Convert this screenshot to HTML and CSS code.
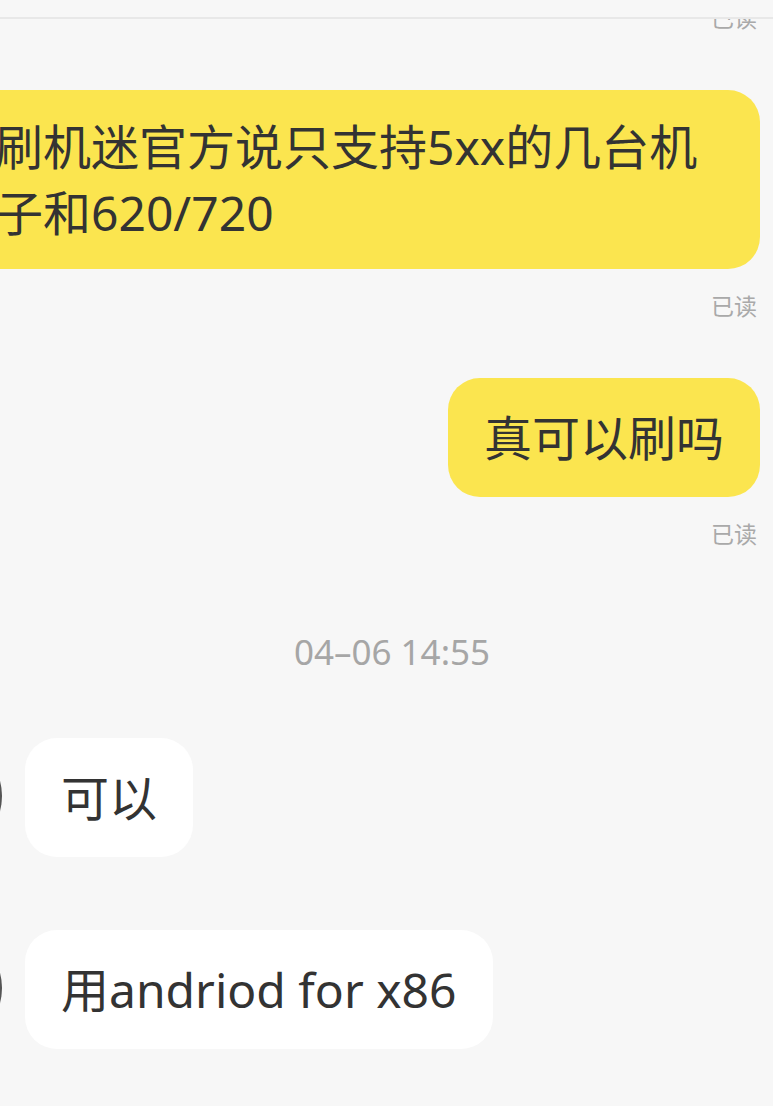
FILE: index.html
```html
<!DOCTYPE html>
<html lang="zh-CN">
<head>
<meta charset="utf-8">
<title>聊天</title>
<link rel="stylesheet" href="styles.css">
</head>
<body>
<header class="topbar"></header>
<main class="chat">
  <div class="read read-first">已读</div>

  <div class="row out gap-a">
    <div class="bubble yellow wide">刷机迷官方说只支持5xx的几台机子和620/720</div>
  </div>
  <div class="read">已读</div>

  <div class="row out gap-a">
    <div class="bubble yellow single">真可以刷吗</div>
  </div>
  <div class="read">已读</div>

  <div class="time">04–06 14:55</div>

  <div class="row in gap-b">
    <div class="avatar"></div>
    <div class="bubble white single">可以</div>
  </div>

  <div class="row in gap-c">
    <div class="avatar"></div>
    <div class="bubble white single">用andriod for x86</div>
  </div>
</main>
</body>
</html>
```
FILE: styles.css
```css
html, body {
  margin: 0;
  padding: 0;
  background: #f7f7f7;
  overflow: hidden;
}

body {
  width: 773px;
  height: 1106px;
  font-family: "Noto Sans", "Noto Sans CJK SC", sans-serif;
  color: #333333;
}

.topbar {
  position: fixed;
  top: 0;
  left: 0;
  right: 0;
  height: 17px;
  background: #f7f7f7;
  border-bottom: 2px solid #e8e8e8;
  z-index: 2;
}

.chat {
  display: flex;
  flex-direction: column;
  padding: 3px 13px 0 0;
}

.read {
  align-self: flex-end;
  font-size: 23px;
  line-height: 30px;
  color: #a9a9a9;
  margin-top: 22px;
  padding-right: 3px;
}

.read-first {
  margin-top: 0;
}

.row {
  display: flex;
  align-items: flex-start;
}

.row.out {
  justify-content: flex-end;
}

.row.in {
  margin-left: -114px;
  gap: 23px;
}

.gap-a { margin-top: 57px; }
.gap-b { margin-top: 66px; }
.gap-c { margin-top: 73px; }

.bubble {
  flex-shrink: 0;
  box-sizing: border-box;
  font-size: 48px;
  line-height: 65.5px;
  padding: 24px 36px;
  border-radius: 32px;
  min-height: 119px;
}

.bubble.single {
  display: flex;
  align-items: center;
  white-space: nowrap;
}

.bubble.wide {
  width: 802px;
  padding-left: 37px;
}

.yellow {
  background: #fbe54f;
}

.white {
  background: #ffffff;
}

.avatar {
  flex-shrink: 0;
  width: 116px;
  height: 116px;
  border-radius: 50%;
  background: #555555;
}

.time {
  align-self: center;
  margin: 83px 0 0 24px;
  font-size: 35px;
  line-height: 40px;
  color: #a6a6a6;
}
```
